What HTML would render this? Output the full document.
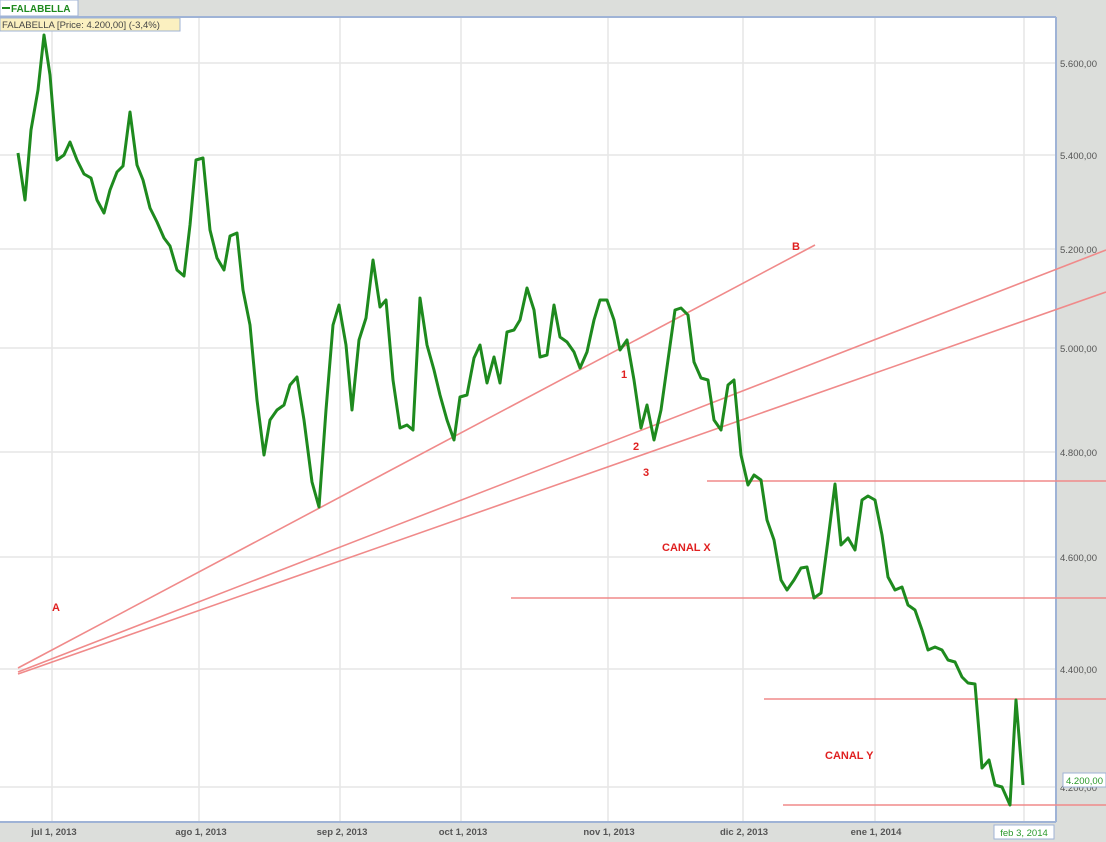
<!DOCTYPE html>
<html><head><meta charset="utf-8"><style>
html,body{margin:0;padding:0;width:1106px;height:842px;overflow:hidden;background:#dcdedb;font-family:"Liberation Sans",sans-serif}
</style></head><body>
<svg width="1106" height="842" xmlns="http://www.w3.org/2000/svg" font-family="Liberation Sans, sans-serif">
<rect x="0" y="0" width="1106" height="842" fill="#dcdedb"/>
<rect x="0" y="17" width="1056" height="805" fill="#ffffff"/>
<g stroke="#e6e6e6" stroke-width="1.5">
<line x1="52" y1="17" x2="52" y2="822"/><line x1="199" y1="17" x2="199" y2="822"/><line x1="340" y1="17" x2="340" y2="822"/><line x1="461" y1="17" x2="461" y2="822"/><line x1="608" y1="17" x2="608" y2="822"/><line x1="743" y1="17" x2="743" y2="822"/><line x1="875" y1="17" x2="875" y2="822"/><line x1="1024" y1="17" x2="1024" y2="822"/>
<line x1="0" y1="63" x2="1056" y2="63"/><line x1="0" y1="155" x2="1056" y2="155"/><line x1="0" y1="249" x2="1056" y2="249"/><line x1="0" y1="348" x2="1056" y2="348"/><line x1="0" y1="452" x2="1056" y2="452"/><line x1="0" y1="557" x2="1056" y2="557"/><line x1="0" y1="669" x2="1056" y2="669"/><line x1="0" y1="787" x2="1056" y2="787"/>
</g>
<line x1="0" y1="17" x2="1056" y2="17" stroke="#9fb3d6" stroke-width="2"/>
<line x1="1056" y1="17" x2="1056" y2="822" stroke="#9fb3d6" stroke-width="2"/>
<line x1="0" y1="822" x2="1056" y2="822" stroke="#9fb3d6" stroke-width="2"/>
<g stroke="#f08a8a" stroke-width="1.6">
<line x1="18" y1="668" x2="815" y2="245"/>
<line x1="18" y1="672" x2="1106" y2="250"/>
<line x1="18" y1="674" x2="1106" y2="292"/>
<line x1="707" y1="481" x2="1106" y2="481"/>
<line x1="511" y1="598" x2="1106" y2="598"/>
<line x1="764" y1="699" x2="1106" y2="699"/>
<line x1="783" y1="805" x2="1106" y2="805"/>
</g>
<polyline fill="none" stroke="#1e8a1e" stroke-width="3" stroke-linejoin="round" points="18,153 25,200 31,130 38,90 44,35 50,75 57,160 64,155 70,142 77,160 84,174 91,178 97,200 104,213 110,190 117,172 123,166 130,112 137,165 143,180 150,208 157,222 164,238 170,246 177,270 184,276 190,225 196,160 203,158 210,230 217,258 224,270 230,236 237,233 243,290 250,325 257,400 264,455 270,420 277,410 284,405 290,385 297,377 304,420 312,482 319,507 326,410 333,325 339,305 346,345 352,410 359,340 366,318 373,260 380,307 386,300 393,380 400,428 407,425 413,430 420,298 427,345 434,370 440,395 447,420 454,440 460,397 467,395 474,358 480,345 487,383 494,357 500,383 507,332 514,330 520,320 527,288 534,310 540,357 547,355 554,305 560,337 567,342 574,352 580,368 587,352 594,320 600,300 607,300 614,320 620,350 627,340 634,380 641,428 647,405 654,440 661,410 668,360 675,310 681,308 688,315 694,362 701,378 708,380 714,420 721,430 728,385 734,380 741,455 748,485 754,475 761,480 767,520 774,540 781,580 787,590 794,580 801,568 807,567 814,598 821,593 828,540 835,484 841,545 848,538 855,550 862,500 868,496 875,500 882,535 888,577 895,590 902,587 908,605 915,610 922,630 928,650 935,647 942,650 948,660 955,662 962,677 968,683 975,684 982,768 989,760 995,785 1002,787 1010,805 1016,700 1023,785"/>
<g fill="#e02020" font-size="11" font-weight="bold">
<text x="52" y="611">A</text><text x="792" y="250">B</text><text x="621" y="378">1</text><text x="633" y="450">2</text><text x="643" y="476">3</text>
<text x="662" y="551">CANAL  X</text><text x="825" y="759">CANAL  Y</text>
</g>
<g fill="#555" font-size="9.5">
<text x="1060" y="67">5.600,00</text><text x="1060" y="159">5.400,00</text><text x="1060" y="253">5.200,00</text><text x="1060" y="352">5.000,00</text><text x="1060" y="456">4.800,00</text><text x="1060" y="561">4.600,00</text><text x="1060" y="673">4.400,00</text><text x="1060" y="791">4.200,00</text>
</g>
<g fill="#555" font-size="9.5" font-weight="bold" text-anchor="middle">
<text x="54" y="835">jul 1, 2013</text><text x="201" y="835">ago 1, 2013</text><text x="342" y="835">sep 2, 2013</text><text x="463" y="835">oct 1, 2013</text><text x="609" y="835">nov 1, 2013</text><text x="744" y="835">dic 2, 2013</text><text x="876" y="835">ene 1, 2014</text>
</g>
<rect x="1063" y="773" width="43" height="14" fill="#fff" stroke="#9fb3d6"/>
<text x="1066" y="784" fill="#2a9a2a" font-size="9.5">4.200,00</text>
<rect x="994" y="825" width="60" height="14" fill="#fff" stroke="#9fb3d6"/>
<text x="1024" y="836" fill="#2a9a2a" font-size="9.5" text-anchor="middle">feb 3, 2014</text>
<rect x="0" y="0" width="78" height="16" fill="#fff" stroke="#9fb3d6"/>
<line x1="2" y1="8" x2="10" y2="8" stroke="#1e8a1e" stroke-width="2"/>
<text x="11" y="12" fill="#1e8a1e" font-size="10" font-weight="bold">FALABELLA</text>
<rect x="0" y="18" width="180" height="13" fill="#fbf0c0" stroke="#9fb3d6"/>
<text x="2" y="28" fill="#444" font-size="9.5">FALABELLA [Price: 4.200,00] (-3,4%)</text>
</svg>
</body></html>
